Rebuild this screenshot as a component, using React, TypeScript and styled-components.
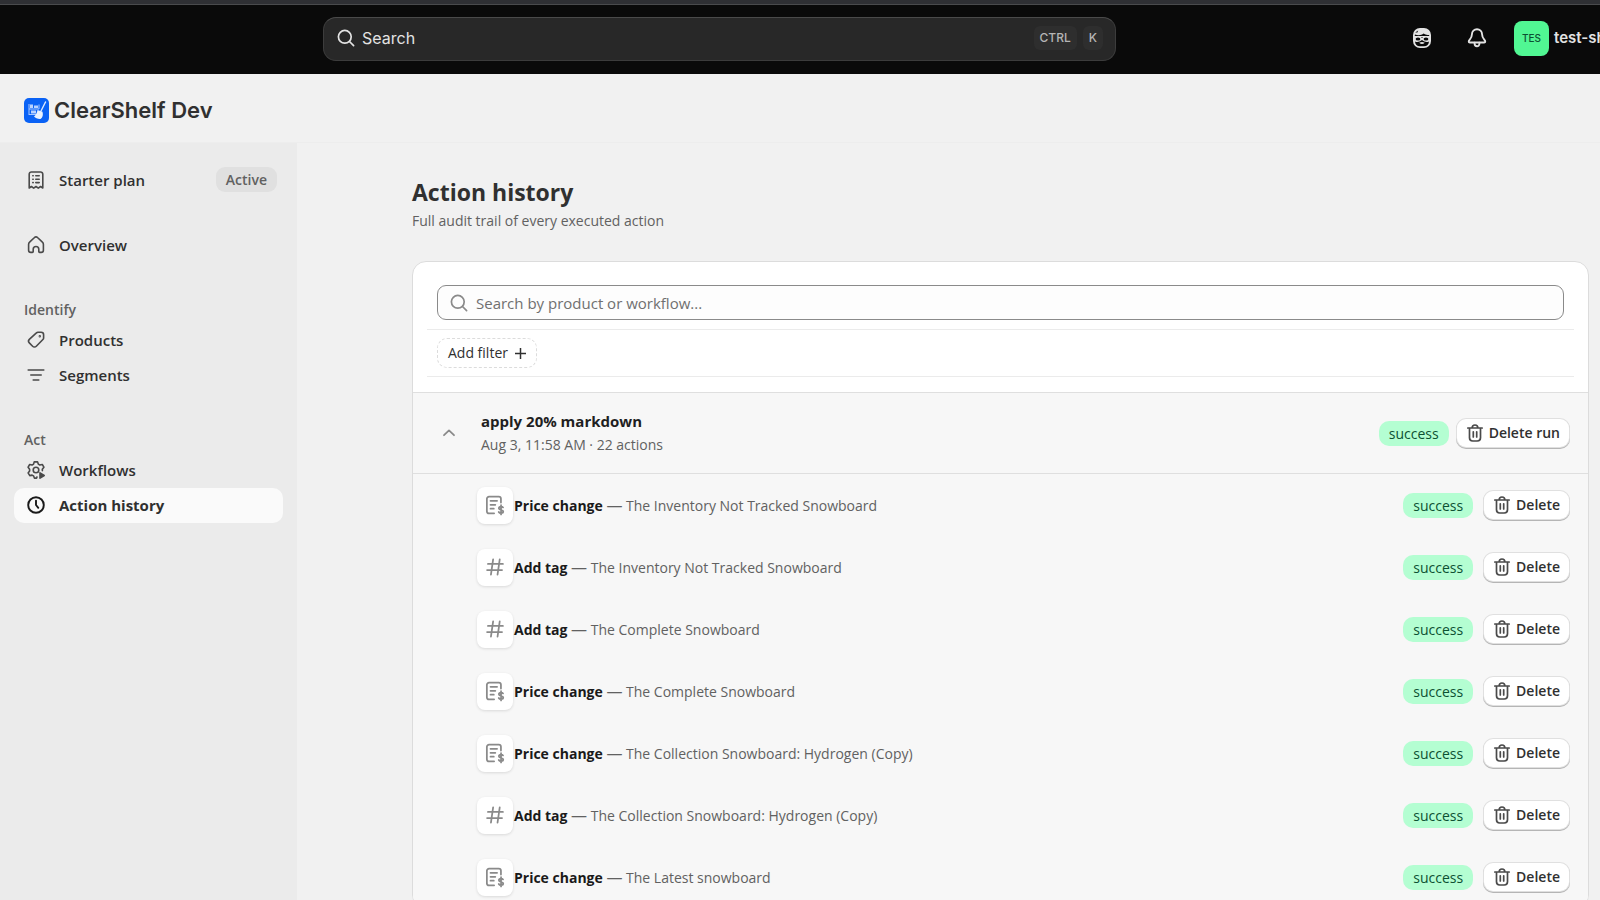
import React from "react";
import styled, { createGlobalStyle, css } from "styled-components";

const GlobalStyle = createGlobalStyle`
  *, *::before, *::after { box-sizing: border-box; }
  body {
    margin: 0;
    background: #f1f1f1;
    color: #303030;
    font-family: "Open Sans", "Noto Sans", sans-serif;
    font-size: 14px;
    line-height: 20px;
  }
  button, input { font: inherit; color: inherit; }
  button { cursor: pointer; }
  h1, h2, h3, p, ul { margin: 0; padding: 0; }
  ul { list-style: none; }
`;

const Shell = styled.div`
  display: flex;
  flex-direction: column;
  height: 100vh;
  overflow: hidden;
`;

/* Top bar */

const TopBar = styled.header`
  display: grid;
  grid-template-columns: 323px minmax(0, 1fr) 484px;
  align-items: center;
  flex: none;
  height: 74px;
  overflow: hidden;
  background: #0a0a0a;
  border-top: 4px solid #2f3034;
  box-shadow: inset 0 1px 0 #4a4b4d;
  font-family: Inter, sans-serif;
`;

const GlobalSearch = styled.button`
  grid-column: 2;
  display: flex;
  align-items: center;
  gap: 6px;
  height: 44px;
  padding: 0 12px 2px;
  border: 1px solid #3c3c3c;
  border-top-color: #4a4a4a;
  border-radius: 13px;
  background: #282828;
  color: #e3e3e3;
  font-size: 16px;
  text-align: left;
`;

const SearchLabel = styled.span`
  flex: 1;
`;

const Key = styled.kbd`
  padding: 0 6px;
  border-radius: 6px;
  background: #2e2e2e;
  color: #b5b5b5;
  font: 500 12px/24px Inter, sans-serif;
`;

const Tools = styled.div`
  display: flex;
  align-items: center;
  gap: 20px;
  padding: 0 0 2px 288px;
`;

const ToolButton = styled.button`
  display: grid;
  place-items: center;
  flex: none;
  width: 35px;
  height: 35px;
  padding: 0;
  border: 0;
  background: none;
  color: #e3e3e3;
`;

const StoreButton = styled.button`
  display: flex;
  align-items: center;
  gap: 5px;
  flex: none;
  padding: 0;
  border: 0;
  background: none;
  color: #e3e3e3;
  font-size: 15px;
  font-weight: 600;
  white-space: nowrap;
`;

const Avatar = styled.span`
  width: 35px;
  border-radius: 8px;
  background: #51f793;
  color: #0c5132;
  font-size: 10px;
  font-weight: 500;
  line-height: 35px;
  text-align: center;
`;

/* App title */

const AppBar = styled.div`
  display: flex;
  align-items: center;
  gap: 5px;
  flex: none;
  height: 69px;
  padding: 4px 24px 0;
  border-bottom: 1px solid #ededed;
  font-family: Inter, sans-serif;
`;

const AppName = styled.span`
  font-size: 22px;
  font-weight: 600;
  line-height: 28px;
`;

const Columns = styled.div`
  display: flex;
  flex: 1;
  min-height: 0;
`;

/* Sidebar */

const Sidebar = styled.nav`
  display: flex;
  flex-direction: column;
  gap: 30px;
  flex: none;
  width: 297px;
  padding: 20px 14px;
  background: #ebebeb;
`;

const NavHeading = styled.h3`
  padding: 4px 10px 0;
  color: #616161;
  font-size: 14px;
  font-weight: 600;
  line-height: 26px;
`;

const NavLink = styled.a<{ $active?: boolean }>`
  display: flex;
  align-items: center;
  gap: 13px;
  height: 35px;
  padding: 0 6px 2px 12px;
  border-radius: 10px;
  color: #303030;
  font-size: 15px;
  font-weight: 600;
  text-decoration: none;
  svg { color: #4a4a4a; }
  ${(p) =>
    p.$active &&
    css`
      background: #fafafa;
      font-weight: 700;
      svg { color: #1a1a1a; }
    `}
`;

const PlanBadge = styled.span`
  margin-left: auto;
  padding: 0 10px;
  border-radius: 9px;
  background: #e0e0e0;
  color: #616161;
  font-size: 14px;
  font-weight: 600;
  line-height: 25px;
`;

/* Page */

const Main = styled.main`
  flex: 1;
  min-width: 0;
  padding: 32px 11px 0 115px;
  overflow-y: auto;
  scrollbar-width: none;
`;

const Title = styled.h1`
  font-size: 23px;
  font-weight: 700;
  line-height: 34px;
`;

const Subtitle = styled.p`
  margin-bottom: 28px;
  color: #616161;
  line-height: 24px;
`;

const Card = styled.section`
  border: 1px solid #dcdcdc;
  border-radius: 14px;
  background: #fff;
  overflow: hidden;
`;

const Filters = styled.div`
  padding: 23px 14px 15px;
`;

const SearchField = styled.label`
  display: flex;
  align-items: center;
  gap: 7px;
  height: 35px;
  margin: 0 10px 9px;
  padding: 0 11px;
  border: 1px solid #8a8a8a;
  border-radius: 9px;
  background: #fdfdfd;
  color: #8a8a8a;
`;

const SearchInput = styled.input`
  flex: 1;
  min-width: 0;
  padding: 0;
  border: 0;
  outline: 0;
  background: none;
  color: #303030;
  font-size: 15px;
  &::placeholder { color: #707070; opacity: 1; }
`;

const FilterRow = styled.div`
  padding: 8px 10px;
  border: solid #ebebeb;
  border-width: 1px 0;
`;

const AddFilter = styled.button`
  display: flex;
  align-items: center;
  gap: 7px;
  height: 30px;
  padding: 0 10px;
  border: 1px dashed #dcdcdc;
  border-radius: 10px;
  background: #fff;
`;

const RunHeader = styled.div`
  display: flex;
  align-items: center;
  gap: 8px;
  height: 82px;
  padding: 0 19px 0 24px;
  border: solid #dfdfdf;
  border-width: 1px 0;
  background: #f7f7f7;
`;

const Toggle = styled.button`
  display: grid;
  place-items: center;
  width: 24px;
  height: 24px;
  padding: 0;
  border: 0;
  background: none;
  color: #8a8a8a;
`;

const RunInfo = styled.div`
  flex: 1;
  padding-left: 12px;
`;

const RunName = styled.h2`
  font-size: 15px;
  font-weight: 700;
  line-height: 24px;
  color: #1f1f1f;
`;

const RunMeta = styled.p`
  color: #616161;
  line-height: 24px;
`;

const Badge = styled.span`
  padding: 0 10px;
  border-radius: 10px;
  background: #b4fed2;
  color: #0c5132;
  line-height: 25px;
`;

const DeleteButton = styled.button`
  display: flex;
  align-items: center;
  gap: 4px;
  height: 28px;
  padding: 0 9px 0 8px;
  border: 0;
  border-radius: 9px;
  background: #fff;
  box-shadow: 0 0 0 1px #e0e0e0, 0 1px 0 1px #b5b5b5;
  font-weight: 600;
  svg { color: #4a4a4a; }
`;

const Actions = styled.ul`
  background: #f7f7f7;
`;

const ActionRow = styled.li`
  display: flex;
  align-items: center;
  gap: 11px;
  height: 62px;
  padding: 0 19px 0 64px;
`;

const ActionLabel = styled.div`
  display: flex;
  align-items: center;
  gap: 1px;
  flex: 1;
  min-width: 0;
`;

const Tile = styled.span`
  display: grid;
  place-items: center;
  width: 36px;
  height: 37px;
  border-radius: 8px;
  background: #fff;
  box-shadow: 0 1px 3px #0000001f;
  color: #8a8a8a;
`;

const ActionText = styled.p`
  color: #616161;
  strong { color: #1a1a1a; font-weight: 700; }
`;

const Dash = styled.span`
  font-size: 16px;
`;

/* Icons, drawn on a 20px grid */

const Svg = ({ size = 20, width = 1.6, children }: { size?: number; width?: number; children: React.ReactNode }) => (
  <svg width={size} height={size} viewBox="0 0 20 20" fill="none" stroke="currentColor" strokeWidth={width} strokeLinecap="round" strokeLinejoin="round" aria-hidden="true">
    {children}
  </svg>
);

const SearchIcon = () => (
  <Svg width={1.7}>
    <circle cx="8.800" cy="8.800" r="6.400" />
    <path d="M13.500 13.500l4.100 4.100" />
  </Svg>
);

const ReceiptIcon = () => (
  <Svg>
    <path d="M3.200 18V4.200a2.200 2.200 0 0 1 2.200-2.200h9.200a2.200 2.200 0 0 1 2.200 2.200V18l-2.200-1.500-2.300 1.600-2.300-1.600-2.300 1.600-2.300-1.600z" />
    <path d="M6.800 5.800h.4M9.800 5.800h3.400M6.800 9.200h.4M9.800 9.200h3.400M6.800 12.600h.4M9.800 12.600h3.400" />
  </Svg>
);

const HomeIcon = () => (
  <Svg>
    <path d="M2.600 9.600c0-1 .3-1.800 1-2.400l4.900-4.700a2.100 2.100 0 0 1 3 0l4.900 4.700c.7.600 1 1.400 1 2.400v5.600a2.200 2.200 0 0 1-2.200 2.200h-1.600a.8.800 0 0 1-.8-.8v-2.300a2.800 2.800 0 0 0-5.600 0v2.300a.8.800 0 0 1-.8.800H4.800a2.200 2.200 0 0 1-2.200-2.200z" />
  </Svg>
);

const TagIcon = () => (
  <Svg>
    <path d="M10.400 2.900a2.400 2.400 0 0 1 1.600-.7h3.100a2.500 2.500 0 0 1 2.500 2.500v3.200c0 .6-.2 1.200-.7 1.600l-6.600 6.800a2.600 2.600 0 0 1-3.700 0l-3.300-3.400a2.500 2.500 0 0 1 0-3.500z" />
    <circle cx="13.800" cy="6.200" r=".4" />
  </Svg>
);

const SegmentIcon = () => (
  <Svg>
    <path d="M2.200 5h15.600M4.800 10h10.400M7.200 15h5.600" />
  </Svg>
);

const WorkflowIcon = () => (
  <Svg>
    <path d="M11 16.900l-.4 1.200H8.400l-.8-2.200-1.500-.8-2.300.5-1.700-2.700 1.500-1.900V9.200L2.100 7.200l1.600-2.700 2.400.5 1.500-.9.600-2.200h3.400l.7 2.200 1.500.9 2.500-.5 1.600 2.700-1.600 2 .1 1.400" />
    <circle cx="10" cy="10" r="2.800" />
    <path d="M14 12.800v5.400l4.200-2.700z" fill="currentColor" />
  </Svg>
);

const ClockIcon = () => (
  <Svg width={1.9}>
    <circle cx="10" cy="10" r="7.800" />
    <path d="M10 5.600V10l2.300 2.800" />
  </Svg>
);

const BellIcon = () => (
  <Svg size={22} width={1.7}>
    <path d="M10 2a4.600 4.600 0 0 0-4.600 4.600c0 2-.6 3.200-2 4.800-.6.700-.9 1.100-.9 1.700 0 .6.400 1 1 1h13c.6 0 1-.4 1-1 0-.6-.3-1-.9-1.700-1.400-1.600-2-2.800-2-4.800A4.600 4.600 0 0 0 10 2z" />
    <path d="M7.800 14.300v1a2.200 2.200 0 0 0 4.400 0v-1" />
  </Svg>
);

const AssistantIcon = () => (
  <svg width="20" height="20" viewBox="0 0 20 20" aria-hidden="true">
    <rect x="1" y="0" width="18" height="20" rx="7" fill="currentColor" />
    <g fill="#0a0a0a">
      <path d="M3 6.600c3.500 1 6.500.6 8.600-1 1.400 1.200 3.200 1.500 5.400 1.300l.3 1H2.700z" />
      <path d="M3.200 4.400l3-1.800-.8 1.800z" />
      <ellipse cx="6" cy="11" rx="2.400" ry="1.500" />
      <ellipse cx="14" cy="11" rx="2.400" ry="1.500" />
      <path d="M9 9h2l-1 1zM3 13.400c2 1 4.500.6 7-1.400 2.500 2 5 2.400 7 1.400-.2 3-2 4.800-5 4.800H8c-3 0-4.800-1.800-5-4.800z" />
    </g>
    <path d="M7.200 14.800q2.800-1.600 5.600 0-2.800 2.600-5.600 0z" fill="currentColor" />
  </svg>
);

const TrashIcon = () => (
  <Svg width={1.7}>
    <path d="M2.800 5h14.400M7.200 4.800a2.800 2.800 0 0 1 5.600 0M4.500 5.200v9.600a3.200 3.200 0 0 0 3.200 3.200h4.600a3.200 3.200 0 0 0 3.200-3.200V5.200M8.300 8.800v5.200M11.700 8.800v5.200" />
  </Svg>
);

const PriceIcon = () => (
  <Svg size={22}>
    <path d="M15.400 7.800V4.400a2 2 0 0 0-2-2H4.600a2 2 0 0 0-2 2v11.200a2 2 0 0 0 2 2h4.600M5.900 6.200h6M5.900 9.800h4.400M5.900 13.400h3" />
    <path d="M17.300 12.200c-.4-.6-1-.8-1.800-.8-1.200 0-2 .5-2 1.500 0 2 4 1 4 3 0 1-.8 1.500-2 1.500-.9 0-1.700-.3-2.100-1M15.500 10.200v8.400" />
  </Svg>
);

const HashIcon = () => (
  <Svg size={22}>
    <path d="M8.300 3L6.300 17M14.300 3l-2 14M3.600 7.200h13.600M2.800 12.800h13.600" />
  </Svg>
);

const AppLogo = () => (
  <svg width="25" height="25" viewBox="0 0 25 25" aria-hidden="true">
    <rect width="25" height="25" rx="5" fill="#0a62f5" />
    <path d="M5 6v11M5 11h10M5 16.500h7M15 6.500V11" stroke="#a9c8ff" fill="none" />
    <path d="M6 6.500h3V10H6zM10 7.500h4V10h-4zM7 12.500h5v3H7z" fill="#b9d2ff" />
    <path d="M21.500 4l-4.500 9" stroke="#dce9ff" strokeWidth="1.400" strokeLinecap="round" />
    <path d="M13.500 12l5 1.800c.9 3 .2 5.800-2 7.200-2.700.2-5-.8-6.500-2.500 2-1.500 3-3.500 3.500-6.500z" fill="#eaf2ff" />
  </svg>
);

const actions = [
  { kind: "Price change", product: "The Inventory Not Tracked Snowboard" },
  { kind: "Add tag", product: "The Inventory Not Tracked Snowboard" },
  { kind: "Add tag", product: "The Complete Snowboard" },
  { kind: "Price change", product: "The Complete Snowboard" },
  { kind: "Price change", product: "The Collection Snowboard: Hydrogen (Copy)" },
  { kind: "Add tag", product: "The Collection Snowboard: Hydrogen (Copy)" },
  { kind: "Price change", product: "The Latest snowboard" },
];

export default function App() {
  return (
    <Shell>
      <GlobalStyle />
      <TopBar>
        <GlobalSearch type="button">
          <SearchIcon />
          <SearchLabel>Search</SearchLabel>
          <Key>CTRL</Key>
          <Key>K</Key>
        </GlobalSearch>
        <Tools>
          <ToolButton type="button" aria-label="Assistant"><AssistantIcon /></ToolButton>
          <ToolButton type="button" aria-label="Notifications"><BellIcon /></ToolButton>
          <StoreButton type="button">
            <Avatar>TES</Avatar>
            test-sh
          </StoreButton>
        </Tools>
      </TopBar>
      <AppBar>
        <AppLogo />
        <AppName>ClearShelf Dev</AppName>
      </AppBar>
      <Columns>
        <Sidebar aria-label="App">
          <NavLink href="#plan"><ReceiptIcon />Starter plan<PlanBadge>Active</PlanBadge></NavLink>
          <NavLink href="#overview"><HomeIcon />Overview</NavLink>
          <div>
            <NavHeading>Identify</NavHeading>
            <NavLink href="#products"><TagIcon />Products</NavLink>
            <NavLink href="#segments"><SegmentIcon />Segments</NavLink>
          </div>
          <div>
            <NavHeading>Act</NavHeading>
            <NavLink href="#workflows"><WorkflowIcon />Workflows</NavLink>
            <NavLink href="#history" $active aria-current="page"><ClockIcon />Action history</NavLink>
          </div>
        </Sidebar>
        <Main>
          <Title>Action history</Title>
          <Subtitle>Full audit trail of every executed action</Subtitle>
          <Card>
            <Filters>
              <SearchField>
                <SearchIcon />
                <SearchInput type="text" aria-label="Search by product or workflow" placeholder="Search by product or workflow..." />
              </SearchField>
              <FilterRow>
                <AddFilter type="button">
                  Add filter
                  <svg width="11" height="11" viewBox="0 0 11 11" stroke="currentColor" strokeWidth="1.500" aria-hidden="true"><path d="M5.500 0v11M0 5.500h11" /></svg>
                </AddFilter>
              </FilterRow>
            </Filters>
            <RunHeader>
              <Toggle type="button" aria-label="Collapse run" aria-expanded="true">
                <Svg width={1.8}><path d="M5 12.200L10 7.400l5 4.800" /></Svg>
              </Toggle>
              <RunInfo>
                <RunName>apply 20% markdown</RunName>
                <RunMeta>Aug 3, 11:58 AM · 22 actions</RunMeta>
              </RunInfo>
              <Badge>success</Badge>
              <DeleteButton type="button"><TrashIcon />Delete run</DeleteButton>
            </RunHeader>
            <Actions>
              {actions.map((a, i) => (
                <ActionRow key={i}>
                  <ActionLabel>
                    <Tile>{a.kind === "Add tag" ? <HashIcon /> : <PriceIcon />}</Tile>
                    <ActionText><strong>{a.kind}</strong> <Dash>—</Dash> {a.product}</ActionText>
                  </ActionLabel>
                  <Badge>success</Badge>
                  <DeleteButton type="button"><TrashIcon />Delete</DeleteButton>
                </ActionRow>
              ))}
            </Actions>
          </Card>
        </Main>
      </Columns>
    </Shell>
  );
}
